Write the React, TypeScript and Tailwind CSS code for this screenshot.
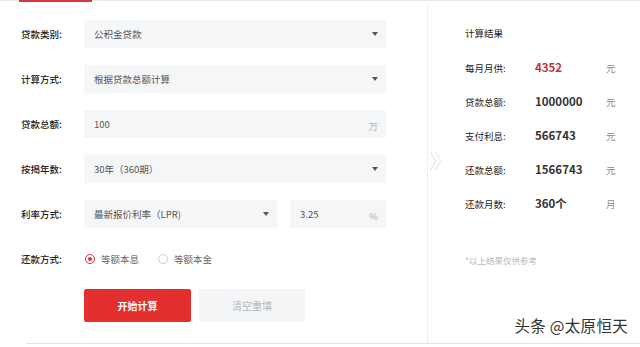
import React from "react";

const font = { fontFamily: '"Noto Sans CJK SC", "Noto Sans", sans-serif' };

function Caret() {
  return (
    <svg width="6" height="4" viewBox="0 0 6 4" className="shrink-0">
      <path d="M0 0 L6 0 L3 4 Z" fill="#555" />
    </svg>
  );
}

function Field({ text, suffix, caret, w = "w-[302px]" }: { text: string; suffix?: string; caret?: boolean; w?: string }) {
  return (
    <div className={`${w} h-[28px] bg-[#f5f6f7] flex items-center justify-between pl-[10px] pr-[8px]`}>
      <span className="text-[9.5px] text-[#555]">{text}</span>
      {caret && <Caret />}
      {suffix && <span className="text-[9.5px] text-[#b5b5b5] pt-[4px]">{suffix}</span>}
    </div>
  );
}

function Row({ label, children }: { label: string; children: React.ReactNode }) {
  return (
    <div className="flex items-center h-[28px] mb-[17px]">
      <div className="w-[63px] text-[9.5px] font-medium text-[#222]">{label}</div>
      {children}
    </div>
  );
}

function Result({ label, value, unit, red }: { label: string; value: string; unit: string; red?: boolean }) {
  return (
    <div className="flex items-center h-[34px]">
      <div className="w-[70px] text-[9.5px] text-[#222]">{label}</div>
      <div className={`w-[71px] text-[11.5px] font-bold ${red ? "text-[#c3323c]" : "text-[#333]"}`}>{value}</div>
      <div className="text-[9.5px] text-[#888]">{unit}</div>
    </div>
  );
}

export default function App() {
  return (
    <div className="relative w-[640px] h-[347px] overflow-hidden bg-white" style={font}>
      <div className="h-px bg-[#e8e8e8]" />
      <div className="absolute left-[19px] top-0 w-[73px] h-[2px] bg-[#d9363e]" />
      <div className="flex h-[342px]">
        <div className="w-[427px] pl-[21px] pt-[19px]">
          <Row label="贷款类别:">
            <Field text="公积金贷款" caret />
          </Row>
          <Row label="计算方式:">
            <Field text="根据贷款总额计算" caret />
          </Row>
          <Row label="贷款总额:">
            <Field text="100" suffix="万" />
          </Row>
          <Row label="按揭年数:">
            <Field text="30年（360期）" caret />
          </Row>
          <Row label="利率方式:">
            <div className="flex gap-[13px]">
              <Field text="最新报价利率（LPR)" caret w="w-[193px]" />
              <Field text="3.25" suffix="%" w="w-[96px]" />
            </div>
          </Row>
          <div className="flex items-center h-[14px] mt-[24px]">
            <div className="w-[63px] text-[9.5px] font-medium text-[#222]">还款方式:</div>
            <div className="flex items-center gap-[6px] ml-[1px]">
              <span className="w-[10px] h-[10px] rounded-full border border-[#d9363e] flex items-center justify-center">
                <span className="w-[4px] h-[4px] rounded-full bg-[#d9363e]" />
              </span>
              <span className="text-[9.5px] text-[#666]">等额本息</span>
            </div>
            <div className="flex items-center gap-[6px] ml-[19px]">
              <span className="w-[10px] h-[10px] rounded-full border border-[#ccc]" />
              <span className="text-[9.5px] text-[#666]">等额本金</span>
            </div>
          </div>
          <div className="flex gap-[8px] ml-[63px] mt-[23px]">
            <button className="w-[107px] h-[33px] bg-[#e3302f] rounded-[2px] text-white text-[10px] font-bold">开始计算</button>
            <button className="w-[106px] h-[33px] bg-[#f4f5f7] rounded-[2px] text-[#b3b6bb] text-[10px]">清空重填</button>
          </div>
        </div>
        <div className="relative flex-1 border-l border-[#efefef] mt-[3px] pl-[37px] pt-[22px]">
          <div className="text-[9.5px] text-[#222] h-[17px] mb-[8px]">计算结果</div>
          <Result label="每月月供:" value="4352" unit="元" red />
          <Result label="贷款总额:" value="1000000" unit="元" />
          <Result label="支付利息:" value="566743" unit="元" />
          <Result label="还款总额:" value="1566743" unit="元" />
          <Result label="还款月数:" value="360个" unit="月" />
          <div className="mt-[33px] text-[8.5px] text-[#b8b8b8]">*以上结果仅供参考</div>
          <svg className="absolute left-[1px] top-[147px]" width="14" height="20" viewBox="0 0 14 20">
            <path d="M1 1 L7 10 L1 19" stroke="#ececec" strokeWidth="1.5" fill="none" />
            <path d="M6 1 L12 10 L6 19" stroke="#ececec" strokeWidth="1.5" fill="none" />
          </svg>
        </div>
      </div>
      <div className="h-px bg-[#e5e5e5] ml-[26px]" />
      <div
        className="absolute right-[12px] top-[314px] text-[15.5px] text-[#333] tracking-[0.3px]"
        style={{ textShadow: "0 0 2px #fff, 0 0 2px #fff" }}
      >
        头条 @太原恒天
      </div>
    </div>
  );
}
